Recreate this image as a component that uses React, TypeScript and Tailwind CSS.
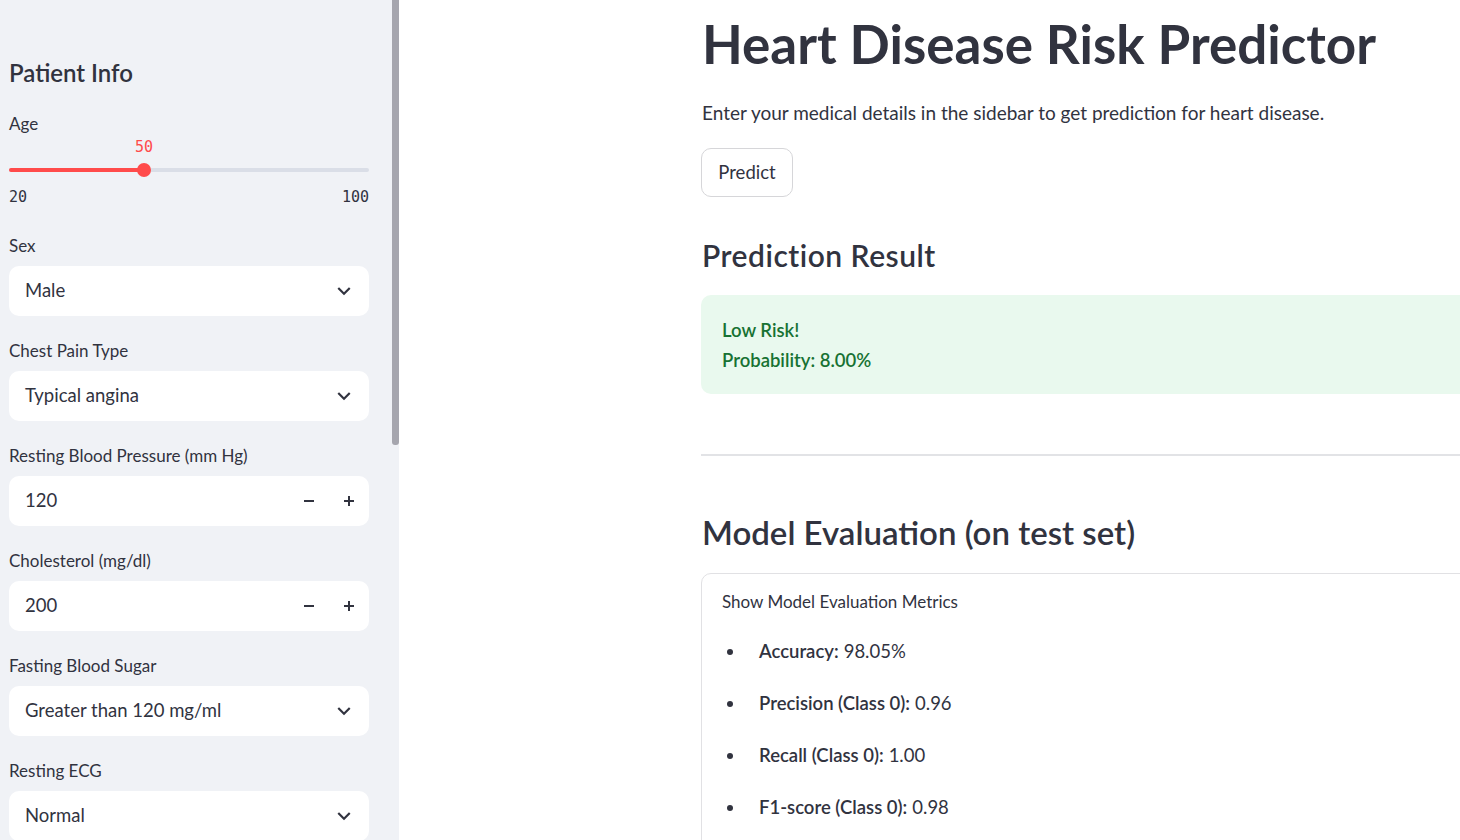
import React from 'react';

const sans = "font-['Lato','Noto_Sans',sans-serif]";
const mono = "font-['DejaVu_Sans_Mono','Liberation_Mono',monospace]";

const Chevron: React.FC = () => (
  <svg width="26" height="26" viewBox="0 0 24 24" fill="#31333f">
    <path d="M16.59 8.59L12 13.17 7.41 8.59 6 10l6 6 6-6z" />
  </svg>
);

const MinusIcon: React.FC = () => (
  <svg width="12" height="12" viewBox="0 0 12 12" fill="#31333f">
    <rect x="1" y="5" width="10" height="2" />
  </svg>
);

const PlusIcon: React.FC = () => (
  <svg width="12" height="12" viewBox="0 0 12 12" fill="#31333f">
    <rect x="1" y="5" width="10" height="2" />
    <rect x="5" y="1" width="2" height="10" />
  </svg>
);

const Field: React.FC<{ label: string; children: React.ReactNode }> = ({ label, children }) => (
  <div className="mb-[24px]">
    <div className="text-[17px] leading-[21px] mb-[10px]">{label}</div>
    {children}
  </div>
);

const Select: React.FC<{ value: string }> = ({ value }) => (
  <div className="h-[50px] rounded-[10px] bg-white flex items-center justify-between pl-[16px] pr-[12px] text-[18.5px]">
    <span>{value}</span>
    <Chevron />
  </div>
);

const NumberInput: React.FC<{ value: string }> = ({ value }) => (
  <div className="h-[50px] rounded-[10px] bg-white flex items-center text-[18.5px]">
    <span className="flex-1 pl-[16px]">{value}</span>
    <div className="w-[40px] h-full flex items-center justify-center"><MinusIcon /></div>
    <div className="w-[40px] h-full flex items-center justify-center"><PlusIcon /></div>
  </div>
);

const metrics = [
  { label: 'Accuracy:', value: '98.05%' },
  { label: 'Precision (Class 0):', value: '0.96' },
  { label: 'Recall (Class 0):', value: '1.00' },
  { label: 'F1-score (Class 0):', value: '0.98' },
];

export default function App() {
  return (
    <div className={`${sans} text-[#31333f] flex w-[1460px] h-[840px] overflow-hidden bg-white`}>
      {/* Sidebar */}
      <aside className="w-[392px] shrink-0 h-full bg-[#f0f2f6] pl-[9px] pr-[23px] pt-[58px]">
        <h2 className="text-[24px] leading-[30px] font-semibold mb-[24.5px]">Patient Info</h2>

        {/* Age slider */}
        <div className="mb-[27px]">
          <div className="text-[17px] leading-[21px] mb-[3px]">Age</div>
          <div className="relative h-[21px]">
            <span className={`${mono} absolute left-[135px] -translate-x-1/2 text-[15px] leading-[21px] text-[#ff4b4b]`}>50</span>
          </div>
          <div className="relative h-[24px]">
            <div className="absolute top-[10px] left-0 right-0 h-[4px] rounded-full bg-[#dadee7]" />
            <div className="absolute top-[10px] left-0 w-[135px] h-[4px] rounded-full bg-[#ff4b4b]" />
            <div className="absolute top-[5px] left-[128px] w-[14px] h-[14px] rounded-full bg-[#ff4b4b]" />
          </div>
          <div className={`${mono} mt-[5.5px] flex justify-between text-[15px] leading-[21px]`}>
            <span>20</span>
            <span>100</span>
          </div>
        </div>

        <Field label="Sex"><Select value="Male" /></Field>
        <Field label="Chest Pain Type"><Select value="Typical angina" /></Field>
        <Field label="Resting Blood Pressure (mm Hg)"><NumberInput value="120" /></Field>
        <Field label="Cholesterol (mg/dl)"><NumberInput value="200" /></Field>
        <Field label="Fasting Blood Sugar"><Select value="Greater than 120 mg/ml" /></Field>
        <Field label="Resting ECG"><Select value="Normal" /></Field>
      </aside>

      {/* Sidebar scrollbar */}
      <div className="w-[7px] shrink-0 h-full bg-[#f0f2f6]">
        <div className="h-[445px] bg-[#a6a6ae] rounded-b-[3px]" />
      </div>

      {/* Main */}
      <main className="flex-1 pl-[302px] pt-[11px] overflow-hidden">
        <div className="w-[1100px]">
          <h1 className="text-[53px] leading-[66px] font-bold pl-px">Heart Disease Risk Predictor</h1>
          <p className="mt-[21.5px] text-[19px] leading-[27px] pl-px">
            Enter your medical details in the sidebar to get prediction for heart disease.
          </p>
          <button className="mt-[22.5px] h-[49px] w-[92px] rounded-[10px] border border-[#d6d6d9] bg-white text-[18.5px]">
            Predict
          </button>

          <h2 className="mt-[38px] text-[30px] leading-[40px] font-semibold tracking-[0.5px] pl-px">Prediction Result</h2>
          <div className="mt-[20px] h-[99px] rounded-[10px] bg-[#e9f9ee] pl-[21px] pt-[20px] text-[18.5px] leading-[30px] font-semibold text-[#177233]">
            <div>Low Risk!</div>
            <div>Probability: 8.00%</div>
          </div>

          <div className="mt-[60px] h-[2px] bg-[#e2e3e6]" />

          <h2 className="mt-[53px] text-[33px] leading-[46px] font-semibold pl-px">Model Evaluation (on test set)</h2>

          <div className="mt-[18px] rounded-[10px] border border-[#e1e1e4] pl-[20px] pt-[16px] h-[300px]">
            <div className="text-[17px] leading-[24px]">Show Model Evaluation Metrics</div>
            <ul className="mt-[23px] flex flex-col gap-[22px]">
              {metrics.map((m) => (
                <li key={m.label} className="flex items-center h-[30px] text-[18.5px]">
                  <span className="w-[6px] h-[6px] rounded-full bg-[#31333f] ml-[5px] mr-[26px]" />
                  <span className="font-semibold">{m.label}</span>
                  <span className="ml-[5px]">{m.value}</span>
                </li>
              ))}
            </ul>
          </div>
        </div>
      </main>
    </div>
  );
}
